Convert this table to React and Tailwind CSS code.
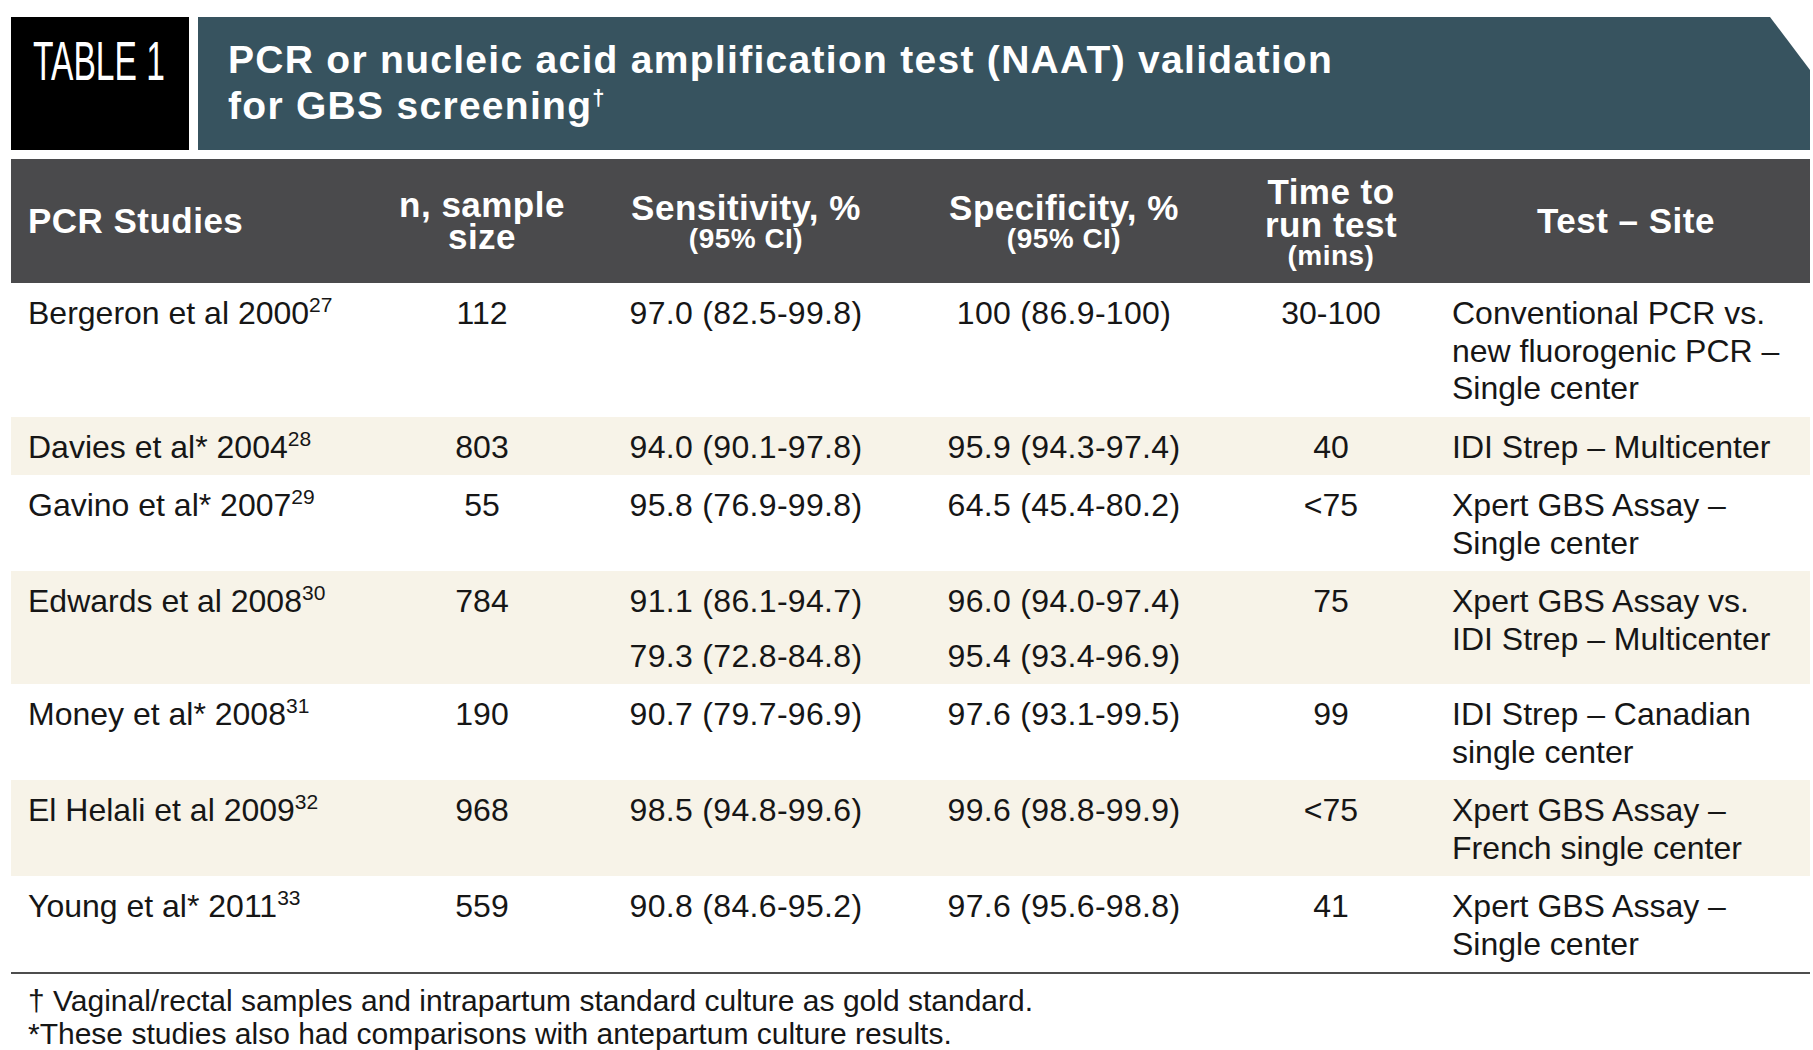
import React from "react";

const rows = [
  { study: "Bergeron et al 2000", ref: "27", n: "112", sens: ["97.0 (82.5-99.8)"], spec: ["100 (86.9-100)"], time: "30-100", site: ["Conventional PCR vs.", "new fluorogenic PCR –", "Single center"], beige: false },
  { study: "Davies et al* 2004", ref: "28", n: "803", sens: ["94.0 (90.1-97.8)"], spec: ["95.9 (94.3-97.4)"], time: "40", site: ["IDI Strep – Multicenter"], beige: true },
  { study: "Gavino et al* 2007", ref: "29", n: "55", sens: ["95.8 (76.9-99.8)"], spec: ["64.5 (45.4-80.2)"], time: "<75", site: ["Xpert GBS Assay –", "Single center"], beige: false },
  { study: "Edwards et al 2008", ref: "30", n: "784", sens: ["91.1 (86.1-94.7)", "79.3 (72.8-84.8)"], spec: ["96.0 (94.0-97.4)", "95.4 (93.4-96.9)"], time: "75", site: ["Xpert GBS Assay vs.", "IDI Strep – Multicenter"], beige: true },
  { study: "Money et al* 2008", ref: "31", n: "190", sens: ["90.7 (79.7-96.9)"], spec: ["97.6 (93.1-99.5)"], time: "99", site: ["IDI Strep – Canadian", "single center"], beige: false },
  { study: "El Helali et al 2009", ref: "32", n: "968", sens: ["98.5 (94.8-99.6)"], spec: ["99.6 (98.8-99.9)"], time: "<75", site: ["Xpert GBS Assay –", "French single center"], beige: true },
  { study: "Young et al* 2011", ref: "33", n: "559", sens: ["90.8 (84.6-95.2)"], spec: ["97.6 (95.6-98.8)"], time: "41", site: ["Xpert GBS Assay –", "Single center"], beige: false },
];

function Stack({ items }) {
  return (
    <div>
      {items.map((t, i) => (
        <div key={i} className={i > 0 ? "mt-[17px]" : ""}>
          {t}
        </div>
      ))}
    </div>
  );
}

export default function App() {
  return (
    <div className="w-[1813px] h-[1050px] bg-white font-['Liberation_Sans',Arial,sans-serif] text-[#161616] pt-[17px] pl-[11px] overflow-hidden">
      <div className="w-[1799px]">
        {/* Title bar */}
        <div className="flex gap-[9px] h-[133px]">
          <div className="w-[178px] bg-black text-white pl-[22px] pt-[16px]">
            <div className="text-[56px] leading-none origin-left scale-x-[0.6] whitespace-nowrap">TABLE 1</div>
          </div>
          <div className="flex-1 bg-[#37535f] [clip-path:polygon(0_0,calc(100%_-_40px)_0,100%_53px,100%_100%,0_100%)] pl-[30px] pt-[20px] text-white font-bold text-[39px] leading-[46px] tracking-[0.033em]">
            PCR or nucleic acid amplification test (NAAT) validation
            <br />
            for GBS screening
            <sup className="text-[22px] -top-[14px]">†</sup>
          </div>
        </div>

        {/* Header row */}
        <div className="mt-[9px] h-[124px] bg-[#4a4a4c] text-white font-bold grid grid-cols-[369px_204px_324px_312px_222px_368px] items-center tracking-[0.03em]">
          <div className="pl-[17px] text-[35px] leading-[32px]">PCR Studies</div>
          <div className="text-center text-[35px] leading-[32px]">
            n, sample
            <br />
            size
          </div>
          <div className="text-center pt-[4px]">
            <div className="text-[35px] leading-[32px]">Sensitivity, %</div>
            <div className="text-[28px] leading-[30px]">(95% CI)</div>
          </div>
          <div className="text-center pt-[4px]">
            <div className="text-[35px] leading-[32px]">Specificity, %</div>
            <div className="text-[28px] leading-[30px]">(95% CI)</div>
          </div>
          <div className="text-center pt-[4px]">
            <div className="text-[35px] leading-[33px]">
              Time to
              <br />
              run test
            </div>
            <div className="text-[28px] leading-[30px]">(mins)</div>
          </div>
          <div className="text-center text-[35px] leading-[32px]">Test – Site</div>
        </div>

        {/* Body rows */}
        <div className="text-[32px] leading-[37.5px]">
          {rows.map((r, i) => (
            <div
              key={i}
              className={`grid grid-cols-[369px_204px_324px_312px_222px_368px] items-start pt-[12px] pb-[9px] ${r.beige ? "bg-[#f7f3e8]" : "bg-white"}`}
            >
              <div className="pl-[17px] whitespace-nowrap">
                {r.study}
                <sup className="text-[21px] -top-[12px]">{r.ref}</sup>
              </div>
              <div className="text-center">{r.n}</div>
              <div className="text-center tracking-[0.01em]">
                <Stack items={r.sens} />
              </div>
              <div className="text-center tracking-[0.01em]">
                <Stack items={r.spec} />
              </div>
              <div className="text-center">{r.time}</div>
              <div className="pl-[10px] whitespace-nowrap">
                {r.site.map((s, k) => (
                  <div key={k}>{s}</div>
                ))}
              </div>
            </div>
          ))}
        </div>

        {/* Footnotes */}
        <div className="border-t-2 border-[#4d4d4d] pt-[10px] pl-[17px] text-[30px] leading-[33px]">
          <div>† Vaginal/rectal samples and intrapartum standard culture as gold standard.</div>
          <div>*These studies also had comparisons with antepartum culture results.</div>
        </div>
      </div>
    </div>
  );
}
